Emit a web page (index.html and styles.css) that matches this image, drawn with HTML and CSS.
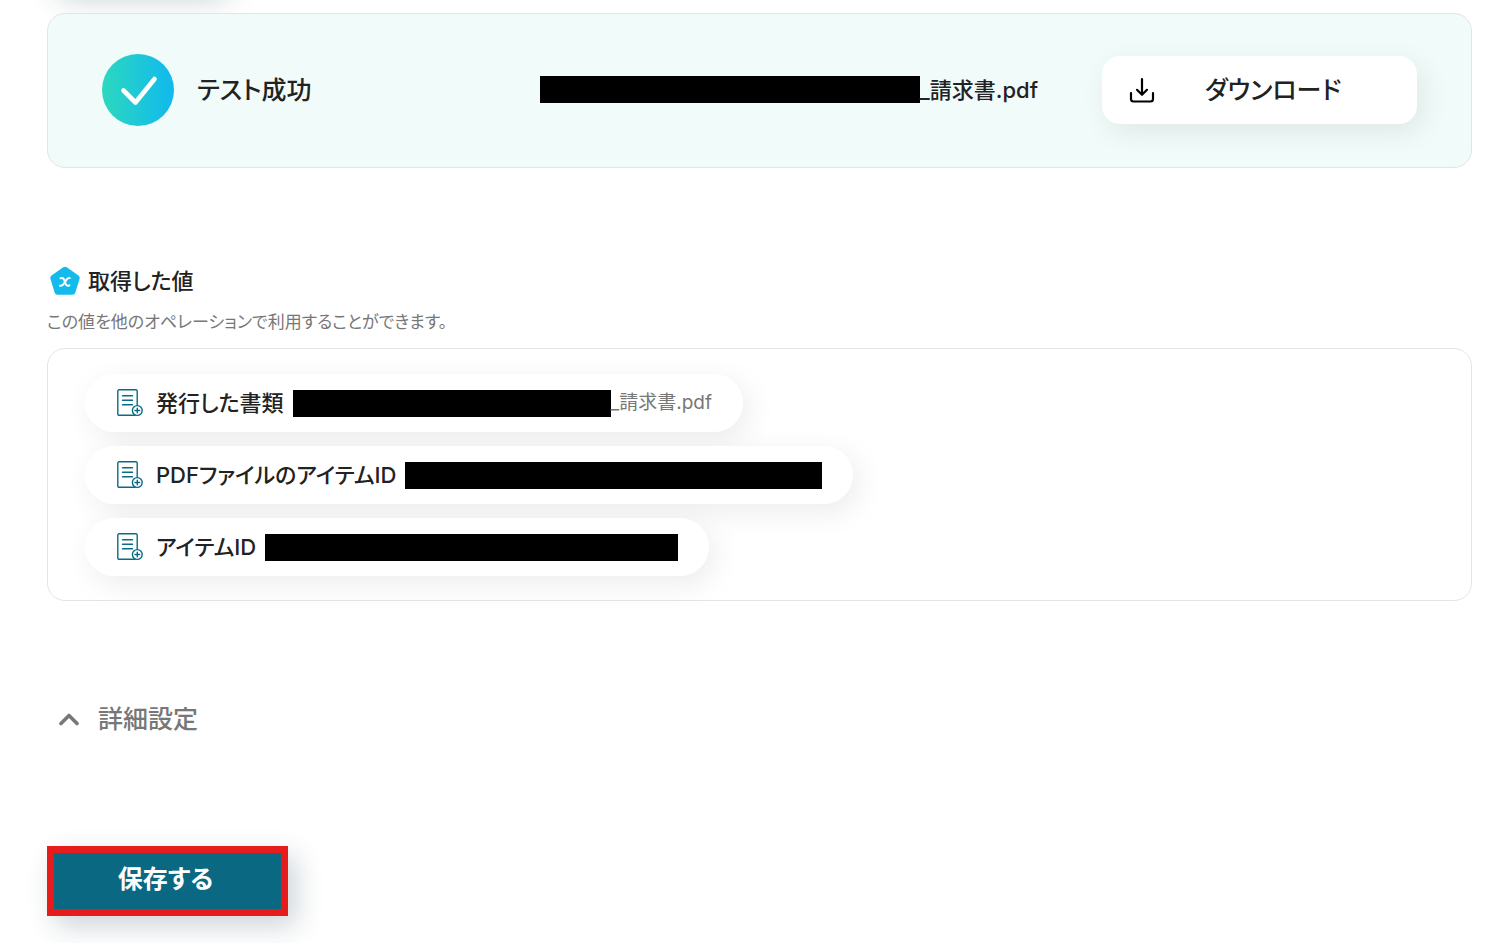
FILE: index.html
```html
<!DOCTYPE html>
<html lang="ja">
<head>
<meta charset="utf-8">
<title>テスト結果</title>
<link rel="stylesheet" href="styles.css">
</head>
<body>
<svg class="sprite" aria-hidden="true">
  <symbol id="doc" viewBox="0 0 26 28">
    <g fill="none" stroke="#0c6a85" stroke-width="1.4" stroke-linecap="round">
      <path d="M18 26.3H2.2a1.4 1.4 0 0 1-1.4-1.4V2.2A1.4 1.4 0 0 1 2.2.8h16.600a1.400 1.400 0 0 1 1.400 1.400v14"/>
      <path d="M5.500 6.700h10M5.500 11.200h10M5.500 15.700h10"/>
      <circle cx="20.300" cy="21.500" r="4.900"/>
      <path d="M18 21.500h4.600M20.300 19.200v4.600"/>
    </g>
  </symbol>
</svg>
<div class="previous-action"></div>
<main class="page">
  <section class="result">
    <svg class="result-icon" viewBox="0 0 72 72" aria-hidden="true">
      <defs><linearGradient id="grad"><stop offset="0" stop-color="#2cd8bf"/><stop offset="1" stop-color="#10b9ee"/></linearGradient></defs>
      <circle cx="36" cy="36" r="36" fill="url(#grad)"/>
      <path d="M21.500 36.500l12 12L52.500 25" fill="none" stroke="#fff" stroke-width="4.600" stroke-linecap="round" stroke-linejoin="round"/>
    </svg>
    <p class="result-title">テスト成功</p>
    <p class="result-file"><span class="mask mask-file"></span>_請求書.pdf</p>
    <button class="download" type="button">
      <svg width="26" height="26" viewBox="0 0 26 26" fill="none" stroke="#000" stroke-width="2.200" stroke-linecap="round" stroke-linejoin="round" aria-hidden="true">
        <path d="M13 2v15.500M8 12.800l5 5 5-5M2 16v6q0 2.500 2.500 2.500h17q2.500 0 2.500-2.500v-6"/>
      </svg>
      <span class="download-label">ダウンロード</span>
    </button>
  </section>

  <section class="values">
    <h2 class="values-title">
      <svg width="36" height="36" viewBox="0 0 36 36" aria-hidden="true">
        <path d="M16.200 4.300q1.800-1.300 3.600 0l11.700 8.200q1.800 1.300 1.100 3.300l-4.300 13.900q-.6 2.100-2.800 2.100H10.500q-2.200 0-2.800-2.100L3.400 15.800q-.7-2 1.100-3.300z" fill="#13bbec"/>
        <path d="M13.500 15.300c2.200-.9 3.300-.2 4.500 3.700s2.300 4.400 4.500 3.300M22.800 15.100c-2-.6-3 .8-4.800 3.900s-3 4.300-5 3.700" fill="none" stroke="#fff" stroke-width="2" stroke-linecap="round"/>
      </svg>
      取得した値
    </h2>
    <p class="values-note">この値を他のオペレーションで利用することができます。</p>
    <ul class="value-list">
      <li class="chip"><svg class="chip-icon" aria-hidden="true"><use href="#doc"/></svg><span class="chip-name">発行した書類</span><span class="chip-value"><span class="mask mask-document"></span>_請求書.pdf</span></li>
      <li class="chip"><svg class="chip-icon" aria-hidden="true"><use href="#doc"/></svg><span class="chip-name">PDFファイルのアイテムID</span><span class="mask mask-pdf-id"></span></li>
      <li class="chip"><svg class="chip-icon" aria-hidden="true"><use href="#doc"/></svg><span class="chip-name">アイテムID</span><span class="mask mask-item-id"></span></li>
    </ul>
  </section>

  <button class="advanced" type="button">
    <svg width="22" height="14" viewBox="0 0 22 14" fill="none" stroke="#777" stroke-width="3.600" stroke-linecap="round" stroke-linejoin="round" aria-hidden="true"><path d="M3 11.500l8-8 8 8"/></svg>
    詳細設定
  </button>

  <button class="save" type="button">保存する</button>
</main>
</body>
</html>
```
FILE: styles.css
```css
* { box-sizing: border-box; }

body {
  margin: 0;
  overflow: hidden;
  background: #fff;
  color: #222;
  font-family: Inter, "Noto Sans CJK JP", sans-serif;
  font-feature-settings: "palt";
  line-height: 36px;
}

button {
  border: 0;
  padding: 0;
  background: none;
  color: inherit;
  font: inherit;
  font-feature-settings: inherit;
  cursor: pointer;
}

p, h2, ul { margin: 0; padding: 0; }

.sprite { position: absolute; width: 0; height: 0; }

.previous-action {
  width: 176px;
  height: 64px;
  margin: -72px 0 21px 47px;
  border-radius: 16px;
  box-shadow: 8px 8px 30px rgba(10, 40, 60, .2);
}

.page {
  display: flex;
  flex-direction: column;
  align-items: flex-start;
  padding: 0 37px 27px 47px;
}

.result {
  display: flex;
  align-items: center;
  align-self: stretch;
  height: 155px;
  padding: 0 54px 2px;
  border: 1px solid #e0e6e5;
  border-radius: 18px;
  background: rgba(239, 250, 248, .85);
}

.result-icon { width: 72px; height: 72px; }

.result-title {
  margin-left: 23px;
  font-size: 25px;
  font-weight: 500;
}

.result-file {
  display: flex;
  align-items: center;
  margin-left: auto;
  font-size: 22px;
  font-weight: 500;
}

.mask { height: 27px; background: #000; }
.mask-file { width: 380px; }
.mask-document { width: 318px; }
.mask-pdf-id { width: 417px; }
.mask-item-id { width: 413px; }

.download {
  display: flex;
  align-items: center;
  width: 315px;
  height: 68px;
  margin-left: 64px;
  padding: 0 26px 0 27px;
  border-radius: 18px;
  background: #fff;
  box-shadow: 6px 8px 28px rgba(0, 0, 0, .08);
  font-size: 25px;
  font-weight: 500;
}

.download-label { flex: 1; }

.values { align-self: stretch; margin-top: 93px; }

.values-title {
  display: flex;
  align-items: center;
  gap: 5px;
  height: 40px;
  font-size: 22px;
  font-weight: 500;
}

.values-note {
  margin-top: 9px;
  color: #777;
  font-size: 17px;
  line-height: 24px;
}

.value-list {
  display: flex;
  flex-direction: column;
  align-items: flex-start;
  gap: 14px;
  margin-top: 14px;
  padding: 25px 37px 24px;
  border: 1px solid #e4e4e4;
  border-radius: 18px;
  list-style: none;
}

.chip {
  display: flex;
  align-items: center;
  height: 58px;
  padding: 0 31px 0 32px;
  border-radius: 29px;
  background: rgba(255, 255, 255, .9);
  box-shadow: 6px 8px 30px rgba(0, 0, 0, .08);
}

.chip-icon { width: 26px; height: 28px; margin-right: 13px; }

.chip-name { margin-right: 9px; font-size: 22px; font-weight: 500; }

.chip-value {
  display: flex;
  align-items: center;
  color: #777;
  font-size: 19px;
}

.advanced {
  display: flex;
  align-items: center;
  gap: 18px;
  margin: 100px 0 0 11px;
  color: #777;
  font-size: 25px;
  font-weight: 500;
}

.save {
  width: 241px;
  height: 70px;
  margin-top: 109px;
  padding: 0 4px 4px 0;
  border: 7px solid #e61b1c;
  background: #0b6882;
  box-shadow: 8px 10px 28px rgba(10, 40, 60, .2);
  color: #fff;
  font-size: 25px;
  font-weight: 700;
}
```
